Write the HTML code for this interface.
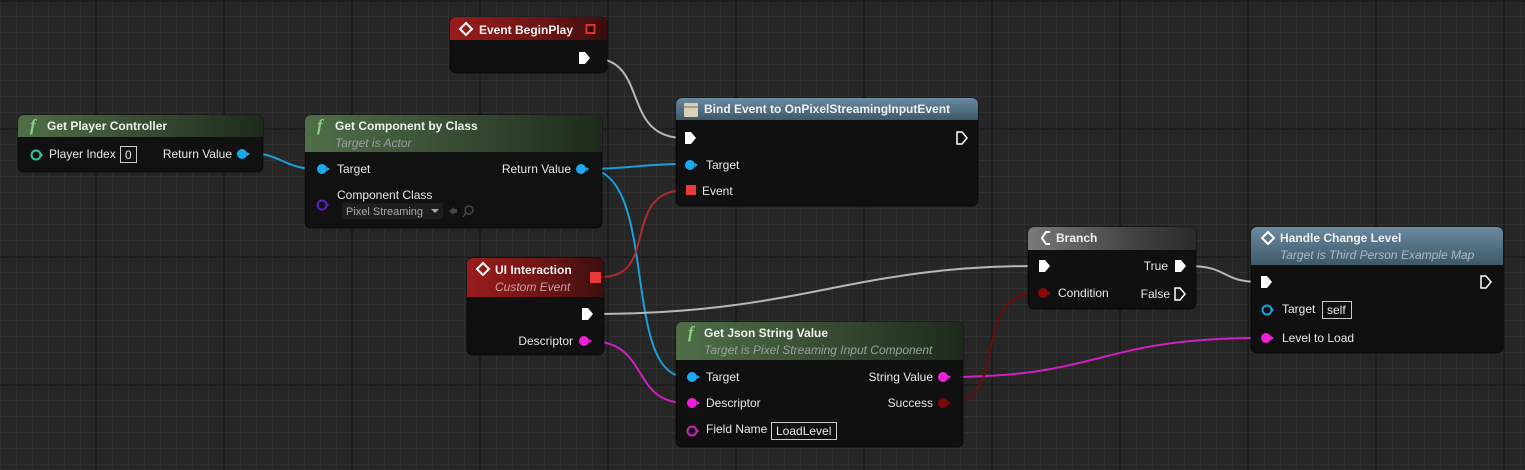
<!DOCTYPE html>
<html><head><meta charset="utf-8"><style>
html,body{margin:0;padding:0;background:#262626;overflow:hidden}
svg{display:block}
text{font-family:"Liberation Sans",sans-serif;font-size:12px;fill:#e8e8e8}
.t{font-weight:bold;font-size:12px;fill:#f0f0f0}
.s{font-style:italic;fill:#9aa0a0}
</style></head><body>
<svg width="1525" height="470" viewBox="0 0 1525 470" xmlns="http://www.w3.org/2000/svg">
<defs>
<pattern id="g" width="16" height="16" patternUnits="userSpaceOnUse" x="0" y="0">
<path d="M0 0H16M0 0V16" stroke="#353535" stroke-width="1.2" fill="none"/>
</pattern>
<linearGradient id="gf" x1="0" x2="1" y1="0" y2="0"><stop offset="0" stop-color="#4f6f48"/><stop offset="0.6" stop-color="#34462f"/><stop offset="1" stop-color="#1e2a1c"/></linearGradient>
<linearGradient id="gfv" x1="0" x2="0" y1="0" y2="1"><stop offset="0" stop-color="#577a50"/><stop offset="1" stop-color="#2d3e2a"/></linearGradient>
<linearGradient id="gr" x1="0" x2="1" y1="0" y2="0"><stop offset="0" stop-color="#9a1c1c"/><stop offset="0.6" stop-color="#6a1414"/><stop offset="1" stop-color="#3a0e0e"/></linearGradient>
<linearGradient id="gb" x1="0" x2="0" y1="0" y2="1"><stop offset="0" stop-color="#6a8aa0"/><stop offset="1" stop-color="#3e5868"/></linearGradient>
<linearGradient id="gy" x1="0" x2="1" y1="0" y2="0"><stop offset="0" stop-color="#7a7a7a"/><stop offset="0.6" stop-color="#444"/><stop offset="1" stop-color="#2a2a2a"/></linearGradient>
</defs>
<rect width="1525" height="470" fill="#262626"/>
<rect width="1525" height="470" fill="url(#g)"/>
<g stroke="#181818" stroke-width="1.5">
<path d="M96 0V470M224 0V470M352 0V470M480 0V470M608 0V470M736 0V470M864 0V470M992 0V470M1120 0V470M1248 0V470M1376 0V470M1504 0V470"/>
<path d="M0 1H1525M0 129H1525M0 257H1525M0 385H1525"/>
</g>

<!-- wires -->
<g fill="none" stroke-width="2">
<path d="M249 153 C280 153,285 169,316 169" stroke="#1aa0d8"/>
<path d="M587 169 C630 169,640 164,685 164" stroke="#1aa0d8"/>
<path d="M587 169 C660 169,620 377,686 377" stroke="#1aa0d8"/>
<path d="M592 58 C650 58,620 138,684 138" stroke="#b8b8b8"/>
<path d="M602 277 C660 277,620 190,686 190" stroke="#b02a2a"/>
<path d="M594 314 C800 314,850 266,1036 266" stroke="#b8b8b8"/>
<path d="M590 341 C650 341,630 403,686 403" stroke="#d020c0"/>
<path d="M950 377 C1100 377,1100 338,1260 338" stroke="#d020c0"/>
<path d="M950 403 C1010 403,970 293,1036 293" stroke="#6a0c0c"/>
<path d="M1188 266 C1230 266,1220 282,1260 282" stroke="#b8b8b8"/>
</g>

<!-- Get Player Controller -->
<g>
<rect x="18" y="115" width="245" height="57" rx="6" fill="#101110" stroke="#000" stroke-opacity=".6"/>
<path d="M24 115H257a6 6 0 0 1 6 6V137H18V121a6 6 0 0 1 6-6z" fill="url(#gf)"/>
<text x="30" y="131" style="font-family:'Liberation Serif',serif;font-style:italic;font-weight:bold;font-size:17px;fill:#8bd080">f</text>
<text class="t" x="47" y="130">Get Player Controller</text>
<circle cx="36" cy="155" r="4.5" fill="none" stroke="#2ec8a0" stroke-width="2"/><path d="M41 153l2 2-2 2z" fill="#2ec8a0"/>
<text x="49" y="158">Player Index</text>
<rect x="120.5" y="146.5" width="16" height="16" fill="none" stroke="#ccc"/>
<text x="125" y="159">0</text>
<text x="232" y="158" text-anchor="end">Return Value</text>
<circle cx="242" cy="154" r="5" fill="#1aa8f0"/><path d="M247 152l3 2-3 2z" fill="#1aa8f0"/>
</g>

<!-- Get Component by Class -->
<g>
<rect x="305" y="115" width="297" height="113" rx="6" fill="#101110" stroke="#000" stroke-opacity=".6"/>
<path d="M311 115H596a6 6 0 0 1 6 6V152H305V121a6 6 0 0 1 6-6z" fill="url(#gf)"/>
<text x="317" y="131" style="font-family:'Liberation Serif',serif;font-style:italic;font-weight:bold;font-size:17px;fill:#8bd080">f</text>
<text class="t" x="335" y="130">Get Component by Class</text>
<text class="s" x="335" y="147">Target is Actor</text>
<circle cx="322" cy="169" r="5" fill="#1aa8f0"/><path d="M327 167l3 2-3 2z" fill="#1aa8f0"/>
<text x="337" y="173">Target</text>
<text x="571" y="173" text-anchor="end">Return Value</text>
<circle cx="581" cy="169" r="5" fill="#1aa8f0"/><path d="M586 167l3 2-3 2z" fill="#1aa8f0"/>
<text x="337" y="199">Component Class</text>
<circle cx="322" cy="205" r="4.5" fill="none" stroke="#5a1cc8" stroke-width="2"/><path d="M327 203l2 2-2 2z" fill="#5a1cc8"/>
<rect x="342" y="203" width="101" height="16" fill="#1e1e1e"/>
<text x="346" y="215" style="font-size:11px;fill:#aaa">Pixel Streaming</text>
<path d="M431 209h8l-4 4z" fill="#aaa"/>
<path d="M449 211l5-4v8z M453 209h4v4h-4z" fill="#444"/>
<circle cx="469" cy="210" r="4" fill="none" stroke="#444" stroke-width="1.6"/><path d="M466 213l-3 4" stroke="#444" stroke-width="1.6"/>
</g>

<!-- Event BeginPlay -->
<g>
<rect x="450" y="17" width="157" height="56" rx="6" fill="#101010" stroke="#000" stroke-opacity=".6"/>
<path d="M456 17H601a6 6 0 0 1 6 6V40H450V23a6 6 0 0 1 6-6z" fill="url(#gr)"/>
<path d="M466 23l6 6-6 6-6-6z" fill="none" stroke="#fff" stroke-width="2"/>
<text class="t" x="479" y="34">Event BeginPlay</text>
<rect x="586.5" y="25" width="8" height="8" fill="#300" stroke="#e03030" stroke-width="2"/>
<path d="M579 52h6l5 6-5 6h-6z" fill="#fff"/>
</g>

<!-- Bind Event -->
<g>
<rect x="676" y="98" width="302" height="108" rx="6" fill="#101010" stroke="#000" stroke-opacity=".6"/>
<path d="M682 98H972a6 6 0 0 1 6 6V120H676V104a6 6 0 0 1 6-6z" fill="url(#gb)"/>
<rect x="684" y="103" width="14" height="14" rx="1" fill="#d8d0b8"/><path d="M684 107h14" stroke="#7a7060"/>
<text class="t" x="704" y="113">Bind Event to OnPixelStreamingInputEvent</text>
<path d="M685 132h6l5 6-5 6h-6z" fill="#fff"/>
<path d="M957 132h5l5 6-5 6h-5z" fill="none" stroke="#fff" stroke-width="1.5"/>
<circle cx="690" cy="165" r="5" fill="#1aa8f0"/><path d="M695 163l3 2-3 2z" fill="#1aa8f0"/>
<text x="706" y="169">Target</text>
<rect x="686" y="185" width="10" height="10" fill="#e83a3a"/>
<text x="702" y="195">Event</text>
</g>

<!-- UI Interaction -->
<g>
<rect x="467" y="258" width="137" height="97" rx="6" fill="#101010" stroke="#000" stroke-opacity=".6"/>
<path d="M473 258H598a6 6 0 0 1 6 6V297H467V264a6 6 0 0 1 6-6z" fill="url(#gr)"/>
<path d="M483 263l6 6-6 6-6-6z" fill="none" stroke="#fff" stroke-width="2"/>
<text class="t" x="495" y="274">UI Interaction</text>
<text class="s" x="495" y="291" style="fill:#c8a0a0">Custom Event</text>
<rect x="590" y="272" width="11" height="11" fill="#e83a3a"/>
<path d="M582 308h6l5 6-5 6h-6z" fill="#fff"/>
<text x="573" y="345" text-anchor="end">Descriptor</text>
<circle cx="584" cy="341" r="5" fill="#f020d8"/><path d="M589 339l3 2-3 2z" fill="#f020d8"/>
</g>

<!-- Get Json String Value -->
<g>
<rect x="676" y="322" width="287" height="125" rx="6" fill="#101010" stroke="#000" stroke-opacity=".6"/>
<path d="M682 322H957a6 6 0 0 1 6 6V360H676V328a6 6 0 0 1 6-6z" fill="url(#gf)"/>
<text x="688" y="338" style="font-family:'Liberation Serif',serif;font-style:italic;font-weight:bold;font-size:17px;fill:#8bd080">f</text>
<text class="t" x="704" y="337">Get Json String Value</text>
<text class="s" x="704" y="354">Target is Pixel Streaming Input Component</text>
<circle cx="692" cy="377" r="5" fill="#1aa8f0"/><path d="M697 375l3 2-3 2z" fill="#1aa8f0"/>
<text x="706" y="381">Target</text>
<circle cx="692" cy="403" r="5" fill="#f020d8"/><path d="M697 401l3 2-3 2z" fill="#f020d8"/>
<text x="706" y="407">Descriptor</text>
<circle cx="692" cy="431" r="4.5" fill="none" stroke="#d020c0" stroke-width="2"/><path d="M697 429l2 2-2 2z" fill="#d020c0"/>
<text x="706" y="433">Field Name</text>
<rect x="771.5" y="422.5" width="65" height="17" fill="none" stroke="#ccc"/>
<text x="776" y="435">LoadLevel</text>
<text x="933" y="381" text-anchor="end">String Value</text>
<circle cx="943" cy="377" r="5" fill="#f020d8"/><path d="M948 375l3 2-3 2z" fill="#f020d8"/>
<text x="933" y="407" text-anchor="end">Success</text>
<circle cx="943" cy="403" r="5" fill="#7a0a0a"/><path d="M948 401l3 2-3 2z" fill="#7a0a0a"/>
</g>

<!-- Branch -->
<g>
<rect x="1028" y="227" width="168" height="82" rx="6" fill="#101010" stroke="#000" stroke-opacity=".6"/>
<path d="M1034 227H1190a6 6 0 0 1 6 6V250H1028V233a6 6 0 0 1 6-6z" fill="url(#gy)"/>
<path d="M1050 232h-4l-4 6 4 6h4" fill="none" stroke="#fff" stroke-width="2"/>
<text class="t" x="1056" y="242">Branch</text>
<path d="M1039 260h6l5 6-5 6h-6z" fill="#fff"/>
<circle cx="1043" cy="293" r="5" fill="#8a0808"/><path d="M1048 291l3 2-3 2z" fill="#8a0808"/>
<text x="1058" y="297">Condition</text>
<text x="1168" y="270" text-anchor="end">True</text>
<path d="M1175 260h6l5 6-5 6h-6z" fill="#fff"/>
<text x="1170" y="298" text-anchor="end">False</text>
<path d="M1175 288h5l5 6-5 6h-5z" fill="none" stroke="#fff" stroke-width="1.5"/>
</g>

<!-- Handle Change Level -->
<g>
<rect x="1251" y="227" width="252" height="126" rx="6" fill="#101010" stroke="#000" stroke-opacity=".6"/>
<path d="M1257 227H1497a6 6 0 0 1 6 6V265H1251V233a6 6 0 0 1 6-6z" fill="url(#gb)"/>
<path d="M1268 232l6 6-6 6-6-6z" fill="none" stroke="#fff" stroke-width="2"/>
<text class="t" x="1280" y="242">Handle Change Level</text>
<text class="s" x="1280" y="259" style="fill:#a8bac6">Target is Third Person Example Map</text>
<path d="M1261 276h6l5 6-5 6h-6z" fill="#fff"/>
<path d="M1481 276h5l5 6-5 6h-5z" fill="none" stroke="#fff" stroke-width="1.5"/>
<circle cx="1267" cy="310" r="4.5" fill="none" stroke="#1aa0e0" stroke-width="2"/><path d="M1272 308l2 2-2 2z" fill="#1aa0e0"/>
<text x="1282" y="313">Target</text>
<rect x="1322.5" y="301.5" width="29" height="17" fill="none" stroke="#ccc"/>
<text x="1327" y="314">self</text>
<circle cx="1266" cy="338" r="5" fill="#f020d8"/><path d="M1271 336l3 2-3 2z" fill="#f020d8"/>
<text x="1282" y="342">Level to Load</text>
</g>
</svg>
</body></html>
